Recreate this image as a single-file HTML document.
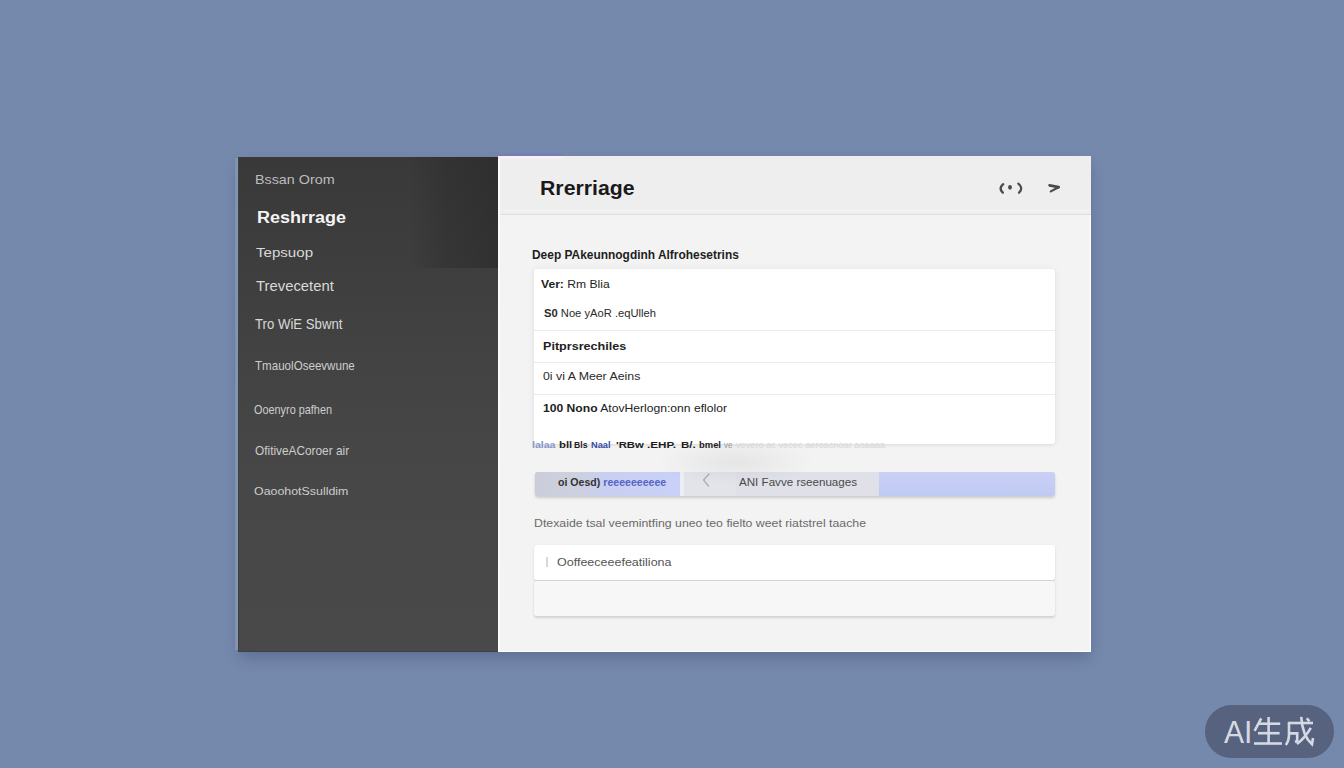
<!DOCTYPE html>
<html><head><meta charset="utf-8">
<style>
*{margin:0;padding:0;box-sizing:border-box}
html,body{width:1344px;height:768px;overflow:hidden}
body{background:#7589ad;font-family:"Liberation Sans",sans-serif;position:relative}
.b{position:absolute}
.t{position:absolute;white-space:nowrap;line-height:1;transform-origin:0 0}
</style></head><body>
<div class="b" style="left:238px;top:157px;width:853px;height:495px;box-shadow:0 7px 14px -2px rgba(40,50,85,.32)"></div>
<div class="b" style="left:235px;top:158px;width:3px;height:492px;background:linear-gradient(90deg,#7e90b4,#8896ac)"></div>
<div class="b" style="left:238px;top:157px;width:260px;height:495px;background:linear-gradient(180deg,#393939 0%,#3e3e3e 22%,#434343 42%,#474747 65%,#494949 100%);border-left:1px solid #3c4148;border-bottom:1px solid #3c4148"></div>
<div class="b" style="left:410px;top:157px;width:88px;height:111px;background:linear-gradient(90deg,rgba(36,36,36,0) 0%,rgba(36,36,36,.3) 40%,rgba(36,36,36,.5) 100%)"></div>
<div class="b" style="left:498px;top:156px;width:593px;height:496px;background:#f3f3f3;border-right:1px solid #fff;border-bottom:1px solid #fff"></div>
<div class="b" style="left:498px;top:156px;width:593px;height:59px;background:#eeeeee;border-bottom:1px solid #dedede"></div>
<div class="b" style="left:500px;top:210px;width:591px;height:1px;background:#f5f5f5"></div>
<div class="b" style="left:498px;top:156px;width:2px;height:496px;background:#fcfcfc"></div>
<div class="b" style="left:498px;top:152px;width:65px;height:4px;background:linear-gradient(180deg,rgba(130,110,190,0),rgba(130,110,190,.55))"></div>
<div class="b" style="left:498px;top:156px;width:65px;height:3px;background:#f7eef7"></div>
<div class="b" style="left:534px;top:269px;width:521px;height:175px;background:#fff;border-radius:3px;box-shadow:0 1px 3px rgba(0,0,0,.07),0 0 8px rgba(0,0,0,.05)"></div>
<div class="b" style="left:534px;top:330px;width:521px;height:1px;background:#ebebeb"></div>
<div class="b" style="left:534px;top:362px;width:521px;height:1px;background:#ebebeb"></div>
<div class="b" style="left:534px;top:394px;width:521px;height:1px;background:#ebebeb"></div>
<div class="b" style="left:535px;top:472px;width:520px;height:24px;border-radius:3px;background:#dfe0e8;box-shadow:0 2px 3px rgba(0,0,0,.16)"></div>
<div class="b" style="left:535px;top:472px;width:145px;height:24px;border-radius:3px 0 0 3px;background:linear-gradient(90deg,#cacdd9 0%,#cdd0de 28%,#c9cff0 48%,#c9d1f8 100%)"></div>
<div class="b" style="left:680px;top:472px;width:4px;height:24px;background:#eceef4"></div>
<div class="b" style="left:684px;top:472px;width:52px;height:24px;background:#e3e4ea"></div>
<div class="b" style="left:879px;top:472px;width:176px;height:24px;border-radius:0 3px 3px 0;background:linear-gradient(180deg,#cbd0f5,#bfcaf3)"></div>
<div class="b" style="left:534px;top:545px;width:521px;height:35px;background:#fff;border-radius:3px;box-shadow:0 1.5px 2.5px rgba(0,0,0,.13)"></div>
<div class="b" style="left:546px;top:557px;width:2px;height:10px;background:#d8d8d8"></div>
<div class="b" style="left:534px;top:581px;width:521px;height:35px;background:#f7f7f7;border-radius:3px;box-shadow:0 1.5px 2.5px rgba(0,0,0,.14)"></div>
<svg class="b" style="left:990px;top:178px" width="80" height="20" viewBox="990 178 80 20">
 <path d="M1003.2 184.2 Q998.2 188.5 1002.8 192.6" fill="none" stroke="#4b4b4b" stroke-width="2.4" stroke-linecap="round"/>
 <ellipse cx="1010" cy="187.3" rx="1.9" ry="2.4" fill="#4b4b4b"/>
 <path d="M1018.3 183.6 Q1023.8 188 1019 192.8" fill="none" stroke="#4b4b4b" stroke-width="2.3" stroke-linecap="round"/>
 <path d="M1049.6 185.3 L1058.6 187.2" fill="none" stroke="#4b4b4b" stroke-width="2.8" stroke-linecap="round"/>
 <path d="M1058.6 187.2 L1050.8 191.4" fill="none" stroke="#4b4b4b" stroke-width="2.2" stroke-linecap="round"/>
</svg>
<svg class="b" style="left:698px;top:470px" width="16" height="20" viewBox="698 470 16 20">
 <path d="M709 474 L703.5 480 L708.5 486" fill="none" stroke="#a9abb8" stroke-width="1.3" stroke-linecap="round"/>
</svg>
<div class="b" style="left:1205px;top:705px;width:129px;height:53px;border-radius:27px;background:#56627e"></div>
<div class="b" style="left:660px;top:436px;width:170px;height:50px;background:radial-gradient(ellipse 80px 22px at 75px 26px,rgba(0,0,10,.06),rgba(0,0,10,0))"></div>
<div class="t" style="left:254.9px;top:172.9px;font-size:13.04px;color:#bdbdbd;transform:scaleX(1.099)">Bssan Orom</div>
<div class="t" style="left:256.9px;top:210.4px;font-size:15.94px;color:#f4f4f4;font-weight:bold;transform:scaleX(1.130)">Reshrrage</div>
<div class="t" style="left:256.0px;top:246.0px;font-size:13.48px;color:#d9d9d9;transform:scaleX(1.120)">Tepsuop</div>
<div class="t" style="left:256.0px;top:279.9px;font-size:13.91px;color:#d9d9d9;transform:scaleX(1.068)">Trevecetent</div>
<div class="t" style="left:255.3px;top:316.2px;font-size:15.07px;color:#d9d9d9;transform:scaleX(0.875)">Tro WiE Sbwnt</div>
<div class="t" style="left:255.0px;top:358.5px;font-size:13.04px;color:#cdcdcd;transform:scaleX(0.889)">TmauolOseevwune</div>
<div class="t" style="left:254.1px;top:403.5px;font-size:12.03px;color:#cdcdcd;transform:scaleX(0.905)">Ooenyro pafhen</div>
<div class="t" style="left:255.3px;top:445.1px;font-size:12.17px;color:#cdcdcd;transform:scaleX(0.974)">OfitiveACoroer air</div>
<div class="t" style="left:253.9px;top:485.5px;font-size:11.59px;color:#cdcdcd;transform:scaleX(1.070)">OaoohotSsulldim</div>
<div class="t" style="left:540.1px;top:178.3px;font-size:20.14px;color:#1a1a1a;font-weight:bold;transform:scaleX(1.057)">Rrerriage</div>
<div class="t" style="left:532.2px;top:249.1px;font-size:12.32px;color:#1e1e1e;font-weight:bold;transform:scaleX(0.969)">Deep PAkeunnogdinh Alfrohesetrins</div>
<div class="t" style="left:541.4px;top:278.8px;font-size:11.16px;color:#222;transform:scaleX(1.086)"><b>Ver:</b> Rm Blia</div>
<div class="t" style="left:544.4px;top:307.7px;font-size:10.58px;color:#2a2a2a;transform:scaleX(1.058)"><b>S0</b> Noe yAoR .eqUlleh</div>
<div class="t" style="left:542.6px;top:340.5px;font-size:10.58px;color:#222;font-weight:bold;transform:scaleX(1.191)">Pitprsrechiles</div>
<div class="t" style="left:543.2px;top:371.0px;font-size:11.16px;color:#2a2a2a;transform:scaleX(1.105)">0i vi A Meer Aeins</div>
<div class="t" style="left:542.7px;top:402.6px;font-size:11.30px;color:#222;transform:scaleX(1.073)"><b>100 Nono</b> AtovHerlogn:onn eflolor</div>
<div class="t" style="left:558.0px;top:477.6px;font-size:10.14px;color:#333;font-weight:bold;transform:scaleX(1.045)">oi Oesd) <span style="color:#5565c4">reeeeeeeeee</span></div>
<div class="t" style="left:739.0px;top:477.6px;font-size:10.14px;color:#4a4a4a;transform:scaleX(1.146)">ANI Favve rseenuages</div>
<div class="t" style="left:533.9px;top:517.5px;font-size:11.16px;color:#6a6a6a;transform:scaleX(1.104)">Dtexaide tsal veemintfing uneo teo fielto weet riatstrel taache</div>
<div class="t" style="left:557.3px;top:557.4px;font-size:11.01px;color:#555;transform:scaleX(1.137)">Ooffeeceeefeatiliona</div>
<div class="t" style="left:1224.2px;top:716.5px;font-size:31.88px;color:#d5d9e3;transform:scaleX(0.944)">AI</div>
<div class="t" style="left:531.7px;top:440.2px;font-size:9.86px;color:#8595c8;font-weight:bold;transform:scaleX(1.067)">lalaa</div>
<div class="t" style="left:558.9px;top:440.2px;font-size:9.86px;color:#1e1e1e;font-weight:bold;transform:scaleX(1.150)">bll</div>
<div class="t" style="left:573.6px;top:440.2px;font-size:9.86px;color:#1e1e1e;font-weight:bold;transform:scaleX(0.879)">Bls</div>
<div class="t" style="left:591.1px;top:440.2px;font-size:9.86px;color:#3a4ca8;font-weight:bold;transform:scaleX(0.937)">Naal</div>
<div class="t" style="left:616.0px;top:440.2px;font-size:9.86px;color:#1e1e1e;font-weight:bold;transform:scaleX(1.148)">'RBw</div>
<div class="t" style="left:647.2px;top:440.2px;font-size:9.86px;color:#1e1e1e;font-weight:bold;transform:scaleX(1.183)">.EHP.</div>
<div class="t" style="left:680.7px;top:440.2px;font-size:9.86px;color:#1e1e1e;font-weight:bold;transform:scaleX(1.173)">B/.</div>
<div class="t" style="left:699.2px;top:440.2px;font-size:9.86px;color:#1e1e1e;font-weight:bold;transform:scaleX(0.957)">bmel</div>
<div class="t" style="left:724.3px;top:440.2px;font-size:9.86px;color:#9a9a9a;transform:scaleX(0.800)">ve</div>
<div class="t" style="left:735.7px;top:440.2px;font-size:9.86px;color:#d8d8d8;transform:scaleX(0.936)">vevero ac vecec aeroacnoar aoaaaa</div>

<svg class="b" style="left:1250px;top:712px" width="70" height="40" viewBox="1250 712 70 40">
 <g fill="none" stroke="#d5d9e3" stroke-width="2.6" stroke-linecap="butt">
  <path d="M1261.2 718.4 L1254.6 730.8"/>
  <path d="M1258.8 723.7 H1280.2"/>
  <path d="M1258 733.2 H1279.6"/>
  <path d="M1254 743.5 H1282"/>
  <path d="M1268.6 717 V743.5"/>
  <path d="M1287.8 723 H1313"/>
  <path d="M1289 723 V734 Q1289 741 1285.8 745"/>
  <path d="M1289 733.4 H1297.2 V741 L1295 742"/>
  <path d="M1301.2 716.8 Q1302.5 736 1312 744.2 L1313 738"/>
  <path d="M1310.8 727.9 Q1305 738 1296.9 744"/>
  <path d="M1306.8 718.2 L1309.4 721.4"/>
 </g>
</svg>
</body></html>
